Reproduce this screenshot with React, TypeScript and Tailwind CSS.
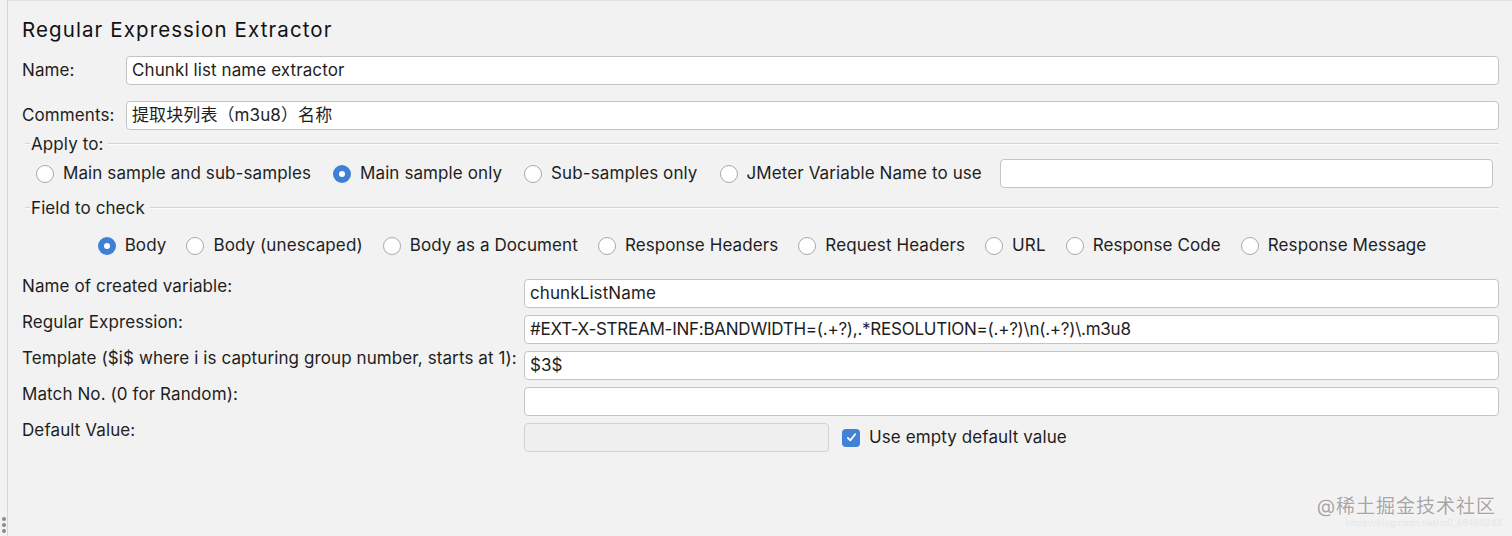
import React from 'react';

const font = { fontFamily: 'Inter, "Noto Sans CJK SC", sans-serif' };

function Radio({ label, checked = false }: { label: string; checked?: boolean }) {
  return (
    <label className="flex items-center gap-[9px] whitespace-nowrap">
      {checked ? (
        <span className="w-[18px] h-[18px] rounded-full bg-[#3f80d6] flex items-center justify-center shrink-0">
          <span className="w-[6px] h-[6px] rounded-full bg-white" />
        </span>
      ) : (
        <span className="w-[18px] h-[18px] rounded-full bg-white border border-[#a9a9a9] shrink-0" />
      )}
      <span>{label}</span>
    </label>
  );
}

function TextInput({ value = '', className = '', disabled = false }: { value?: string; className?: string; disabled?: boolean }) {
  return (
    <div
      className={
        'h-[29px] rounded-[4px] border flex items-center px-[5px] whitespace-nowrap overflow-hidden ' +
        (disabled ? 'bg-[#f0f0f0] border-[#d2d2d2] ' : 'bg-white border-[#c4c4c4] ') +
        className
      }
    >
      {value}
    </div>
  );
}

function SectionTitle({ title }: { title: string }) {
  return (
    <div className="flex items-center h-[20px]">
      <div className="w-[5px] h-[2px] border-t border-[#d4d4d4] bg-[#fbfbfb]" />
      <span className="px-[1px] leading-[20px]">{title}</span>
      <div className="flex-1 h-[2px] border-t border-[#d4d4d4] bg-[#fbfbfb] ml-[4px]" />
    </div>
  );
}

const fields: { label: string; value?: string; tight?: boolean }[] = [
  { label: 'Name of created variable:', value: 'chunkListName' },
  { label: 'Regular Expression:', value: '#EXT-X-STREAM-INF:BANDWIDTH=(.+?),.*RESOLUTION=(.+?)\\n(.+?)\\.m3u8', tight: true },
  { label: 'Template ($i$ where i is capturing group number, starts at 1):', value: '$3$' },
  { label: 'Match No. (0 for Random):', value: '' },
];

export default function App() {
  return (
    <div className="w-screen h-[536px] bg-[#f2f2f2] flex overflow-hidden text-[17px] tracking-[0.1px] text-[#1e1e1e] relative" style={font}>
      {/* split pane handle */}
      <div className="w-[8px] border-r border-[#d6d6d6] flex flex-col justify-end items-center pb-[3px] gap-[2px]">
        <span className="w-[4px] h-[4px] rounded-full bg-[#8a8a8a]" />
        <span className="w-[4px] h-[4px] rounded-full bg-[#8a8a8a]" />
        <span className="w-[4px] h-[4px] rounded-full bg-[#8a8a8a]" />
      </div>

      <div className="flex-1 flex flex-col pl-[14px] pr-[13px] pt-[15px] border-t border-[#e2e2e2]">
        <div className="h-[28px] leading-[28px] text-[20.5px] tracking-[1.1px] text-[#111]">Regular Expression Extractor</div>

        <div className="flex items-center mt-[12px]">
          <span className="w-[104px]">Name:</span>
          <TextInput className="flex-1" value="Chunkl list name extractor" />
        </div>
        <div className="flex items-center mt-[16px]">
          <span className="w-[104px]">Comments:</span>
          <TextInput className="flex-1" value="提取块列表（m3u8）名称" />
        </div>

        <div className="ml-[3px] mt-[4px]">
          <SectionTitle title="Apply to:" />
          <div className="flex items-center h-[29px] mt-[5px] pl-[11px] pr-[6px] gap-[22px]">
            <Radio label="Main sample and sub-samples" />
            <Radio label="Main sample only" checked />
            <Radio label="Sub-samples only" />
            <Radio label="JMeter Variable Name to use" />
            <TextInput className="flex-1 -ml-[4px]" />
          </div>
        </div>

        <div className="ml-[3px] mt-[10px]">
          <SectionTitle title="Field to check" />
          <div className="flex items-center justify-center h-[29px] mt-[13px] gap-[20px]">
            <Radio label="Body" checked />
            <Radio label="Body (unescaped)" />
            <Radio label="Body as a Document" />
            <Radio label="Response Headers" />
            <Radio label="Request Headers" />
            <Radio label="URL" />
            <Radio label="Response Code" />
            <Radio label="Response Message" />
          </div>
        </div>

        <div className="flex flex-col gap-[4px] mt-[16px]">
          {fields.map((f) => (
            <div key={f.label} className="flex items-start">
              <span className="w-[502px] leading-[20px] whitespace-nowrap">{f.label}</span>
              <TextInput className={'flex-1 mt-[3px] ' + (f.tight ? 'tracking-[-0.25px]' : '')} value={f.value} />
            </div>
          ))}
          <div className="flex items-start">
            <span className="w-[502px] leading-[20px]">Default Value:</span>
            <div className="flex items-center mt-[3px] gap-[9px]">
              <TextInput className="w-[305px]" disabled />
              <span className="ml-[4px] w-[18px] h-[18px] rounded-[4px] bg-[#4182d8] flex items-center justify-center">
                <svg viewBox="0 0 16 16" className="w-[13px] h-[13px]" fill="none" stroke="white" strokeWidth="2.2" strokeLinecap="round" strokeLinejoin="round">
                  <path d="M3.5 8.5 L6.5 11.5 L12.5 4" />
                </svg>
              </span>
              <span>Use empty default value</span>
            </div>
          </div>
        </div>
      </div>

      {/* watermark */}
      <div className="absolute right-[16px] bottom-[8px] flex flex-col items-end">
        <span className="text-[19px] leading-[22px] text-[#a6a6a6] tracking-[1px]" style={{ textShadow: '0 0 2px #fff' }}>
          @稀土掘金技术社区
        </span>
        <span className="text-[9px] leading-[10px] text-[#e6e6e6] mr-[-6px]">https://blog.csdn.net/m0_46495243</span>
      </div>
    </div>
  );
}
